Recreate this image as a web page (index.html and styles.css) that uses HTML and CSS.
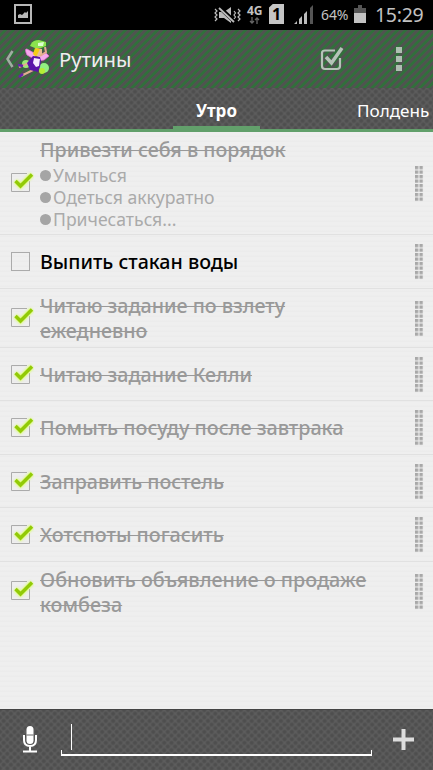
FILE: index.html
```html
<!DOCTYPE html>
<html lang="ru">
<head>
<meta charset="utf-8">
<title>Рутины</title>
<link rel="stylesheet" href="styles.css">
</head>
<body>
<svg width="0" height="0" class="defs">
  <defs>
    <pattern id="dots" width="4.5" height="4.5" patternUnits="userSpaceOnUse"><rect width="3.3" height="3.3" fill="#a8a8a8"/></pattern>
    <symbol id="grip" viewBox="0 0 9 36"><rect width="9" height="36" fill="url(#dots)"/></symbol>
    <symbol id="box" viewBox="0 0 24 24"><rect x="1.5" y="3.5" width="18" height="18" fill="none" stroke="#ababab"/></symbol>
    <symbol id="done" viewBox="0 0 24 24">
      <path d="M17 3.5H1.5v18h18V11" fill="none" stroke="#ababab"/>
      <path class="glow" d="M5.500 11l5 5L22 4.500"/>
      <path d="M5.500 11l5 5L22 4.500" fill="none" stroke="#92ca08" stroke-width="3.400"/>
    </symbol>
  </defs>
</svg>
<header class="status">
  <svg class="picture" width="18" height="20" viewBox="0 0 18 20"><rect x="1" y="1" width="16" height="18" fill="none" stroke="#b8b8b8" stroke-width="2"/><path d="M4 14v-3l2-1 2 1 3-3 1 1 2-2v7z" fill="#b8b8b8"/></svg>
  <svg class="mute" width="28" height="20" viewBox="0 0 28 20" fill="none" stroke="#bbb" stroke-width="1.200"><path d="M6 7h5l7-5v16l-7-5H6z" fill="#bbb" stroke="none"/><path d="M6 2l16 15" stroke="#000" stroke-width="4"/><path d="M6 3l15 14" stroke-width="1.800"/><path d="M2 4l2 2-2 2 2 2-2 2 2 2-2 2M25 4l2 2-2 2 2 2-2 2 2 2-2 2M21 6l1.500 2-1.500 2 1.500 2-1.500 2"/></svg>
  <div class="network"><span>4G</span><svg width="12" height="7" viewBox="0 0 12 7"><path d="M3 0v6M1 4l2 2 2-2M8 7V1M6 3l2-2 2 2" fill="none" stroke="#666" stroke-width="1.300"/></svg></div>
  <div class="sim">1</div>
  <svg class="signal" width="20" height="19" viewBox="0 0 20 19"><path d="M0 19h3v-3zM5 19h3v-8l-3 3zM10 19h3V6l-3 3z" fill="#bbb"/><path d="M16 19h3V0l-3 3z" fill="#555"/></svg>
  <span class="percent">64%</span>
  <svg class="battery" width="12" height="18" viewBox="0 0 12 18"><path d="M4 0h4v3h4v5H0V3h4z" fill="#555"/><path d="M0 8h12v10H0z" fill="#c2c2c2"/></svg>
  <time>15:29</time>
</header>
<div class="appbar">
  <svg class="back" width="9" height="18" viewBox="0 0 9 18"><path d="M7.500 1L2.500 9l5 8" fill="none" stroke="#a0aea2" stroke-width="2.500"/></svg>
  <svg class="fairy" width="32" height="38" viewBox="0 0 32 38">
    <circle cx="8" cy="24" r="4" fill="#9ce878"/><circle cx="26" cy="28" r="5" fill="#93ef82"/><circle cx="24" cy="31" r="3" fill="#b6ed36"/>
    <path d="M18 14L9 9Q6 8 9 15L16 19M20 16l8-3 3 3-5 4-6 1" fill="#f5aaed" stroke="#e868d7" stroke-width=".7"/>
    <path d="M13 4Q15 0 21 0l7 2v4l-5 2h-6L12 6z" fill="#8be34e"/><path d="M20 3l6-1-1 4h-5z" fill="#dcffd0"/>
    <path d="M18 8l6 1v5l-4 3-4-2z" fill="#e9bd94"/><path d="M17 8l5 1-2 4-2 4-3-3z" fill="#f5cd16"/>
    <path d="M22 16l6-4-1-5M11 23l-5 2-5 2M15 30L3 36" stroke="#e2ad91" stroke-width="2" fill="none"/>
    <path d="M15 16l7 1 1 4-1 6-2 5-8-2-3-7z" fill="#5a13a8"/><path d="M16 18l6 1-1 7-3 1-3-4z" fill="#f6e9ff"/>
    <path d="M0 25l5 1M1 37l4-3" stroke="#6820ad" stroke-width="2.500"/>
  </svg>
  <h1>Рутины</h1>
  <svg class="check-action" width="24" height="26" viewBox="0 0 24 26" fill="none" stroke="#b6c3b8"><path d="M15 4.500H5Q2 4.500 2 7v13q0 3 3 3h12q3 0 3-3v-8" stroke-width="2.200"/><path d="M6 11l5.500 6L22 2" stroke-width="3.500"/></svg>
  <svg class="more" width="6" height="24" viewBox="0 0 6 24"><path d="M0 0h6v6H0zM0 9h6v6H0zM0 18h6v6H0z" fill="#aebfb1"/></svg>
</div>
<nav class="tabs"><div class="tab active"><span>Утро</span></div><div class="tab next"><span>Полдень</span></div></nav>
<main class="list">
  <section class="row first"><svg class="check"><use href="#done"/></svg><div class="body"><p class="title">Привезти себя в порядок</p><ul><li>Умыться</li><li>Одеться аккуратно</li><li>Причесаться...</li></ul></div><svg class="grip"><use href="#grip"/></svg></section>
  <section class="row open"><svg class="check"><use href="#box"/></svg><p class="title">Выпить стакан воды</p><svg class="grip"><use href="#grip"/></svg></section>
  <section class="row double"><svg class="check"><use href="#done"/></svg><p class="title">Читаю задание по взлету<br>ежедневно</p><svg class="grip"><use href="#grip"/></svg></section>
  <section class="row"><svg class="check"><use href="#done"/></svg><p class="title">Читаю задание Келли</p><svg class="grip"><use href="#grip"/></svg></section>
  <section class="row"><svg class="check"><use href="#done"/></svg><p class="title wide">Помыть посуду после завтрака</p><svg class="grip"><use href="#grip"/></svg></section>
  <section class="row"><svg class="check"><use href="#done"/></svg><p class="title">Заправить постель</p><svg class="grip"><use href="#grip"/></svg></section>
  <section class="row"><svg class="check"><use href="#done"/></svg><p class="title wide">Хотспоты погасить</p><svg class="grip"><use href="#grip"/></svg></section>
  <section class="row double last"><svg class="check"><use href="#done"/></svg><p class="title wide">Обновить объявление о продаже<br>комбеза</p><svg class="grip"><use href="#grip"/></svg></section>
</main>
<footer class="composer">
  <svg class="mic" width="14" height="28" viewBox="0 0 14 28"><rect x="3.500" y="1" width="7" height="18" rx="3.500" fill="#fff"/><path d="M1 10v5q0 6 6 6t6-6v-5M7 21v5M0 26.500h14" fill="none" stroke="#fff" stroke-width="2"/><path d="M3.500 10h7" stroke="#666"/></svg>
  <div class="field"><i></i></div>
  <svg class="plus" width="21" height="21" viewBox="0 0 21 21"><path d="M10.500 0v21M0 10.500h21" stroke="#ddd" stroke-width="4"/></svg>
</footer>
</body>
</html>
```
FILE: styles.css
```css
* { box-sizing: border-box; }
body { margin: 0; width: 433px; height: 770px; display: flex; flex-direction: column; overflow: hidden; background: #eee; font-family: "Noto Sans", sans-serif; }
p, h1, ul { margin: 0; padding: 0; }
svg { display: block; flex: none; }
.defs { position: absolute; }
.status { height: 30px; flex: none; background: #000; color: #c2c2c2; display: flex; align-items: center; }
.picture { margin: -2px 0 0 14px; }
.mute { margin: -1px 0 0 181px; }
.network { width: 16px; margin-left: 6px; font: bold 12px/13px "Noto Sans", sans-serif; }
.network svg { margin: 0 0 0 2px; }
.network { margin-top: -3px; }
.sim { width: 15px; height: 20px; margin: -2px 0 0 6px; background: #c5c5c5; color: #000; font: bold 16px/20px "Noto Sans", sans-serif; text-align: center; clip-path: polygon(25% 0, 100% 0, 100% 100%, 0 100%, 0 18%); }
.signal { margin: -2px 0 0 10px; }
.percent { width: 29px; margin-left: 7px; font-size: 14px; letter-spacing: -.1px; margin-top: -2px; }
.battery { margin: -2px 0 0 4px; }
time { margin-left: 9px; font-size: 19.500px; letter-spacing: -.3px; line-height: 28px; margin-top: -1px; }
.appbar { height: 58px; flex: none; display: flex; align-items: center; background: repeating-linear-gradient(135deg, #505350 0 2.200px, #31703b 3px 4.860px, #505350 5.660px); }
.back { margin-left: 5px; }
.fairy { margin-left: 4px; }
h1 { width: 74px; margin-left: 9px; font-size: 20.300px; font-weight: 400; color: #eee; }
.check-action { margin-left: 187px; }
.more { margin-left: 52px; }
.tabs, .composer { background-color: #5d5d5d; background-image: radial-gradient(circle, #4e4e4e 0 1.200px, #4e4e4e00 2.800px), radial-gradient(circle, #4e4e4e 0 1.200px, #4e4e4e00 2.800px); background-size: 7.300px 7.300px; background-position: 0 0, 3.650px 3.650px; }
.tabs { height: 44px; flex: none; display: flex; border-bottom: 3px solid #62a06b; color: #fff; font-size: 17.100px; line-height: 45px; }
.tab.active { width: 87px; height: 41px; margin-left: 173px; border-bottom: 3px solid #62a06b; text-align: center; font-weight: 700; font-size: 17px; }
.tab.next { margin-left: 97px; }
.list { flex: 1; background: repeating-linear-gradient(#efefef 0 3px, #ececec 4px 5px); }
.row { height: 53.500px; display: flex; align-items: center; border-bottom: 1px solid #e1e1e1; }
.row.first { height: 103px; align-items: flex-start; }
.row.double { height: 59px; }
.row.last { border: 0; }
.check { width: 24px; height: 24px; margin: 0 6px 0 10px; }
.double .check { margin-top: -2px; }
.first .check { margin-top: 38px; }
.grip { width: 9px; height: 36px; margin-left: auto; margin-right: 9px; }
.first .grip { margin-top: 34px; }
.row:not(.first) .grip { margin-top: 2px; }
.glow { fill: none; stroke: #daff68; stroke-width: 5px; filter: blur(1.300px); }
.title { color: #999; font-size: 19.650px; font-weight: 500; line-height: 25px; padding-top: 1px; text-decoration: line-through; text-decoration-thickness: 1.300px; white-space: nowrap; }
.title.wide { font-size: 19.780px; }
.first .title { margin-top: 5px; padding: 0; }
.open .title { color: #000; text-decoration: none; }
ul { list-style: none; color: #aaa; font-size: 17.600px; line-height: 22px; margin-top: 2px; }
li { display: flex; align-items: center; white-space: nowrap; }
li::before { content: ""; width: 11px; height: 11px; margin-right: 2px; border-radius: 50%; background: #a5a5a5; }
.composer { height: 61px; flex: none; display: flex; align-items: center; border-top: 1px solid #444; }
.mic { margin-left: 23px; margin-top: -2px; }
.field { width: 311px; height: 32px; margin: 0 0 0 24px; position: relative; background: linear-gradient(#fff, #fff) 0 100%/1px 4px no-repeat, linear-gradient(#fff, #fff) 100% 100%/1px 4px no-repeat; border-bottom: 2px solid #fff; }
.field i { display: block; width: 1px; height: 26px; margin-left: 10px; background: #fff; }
.plus { margin-left: 21px; margin-top: -2px; }
```
